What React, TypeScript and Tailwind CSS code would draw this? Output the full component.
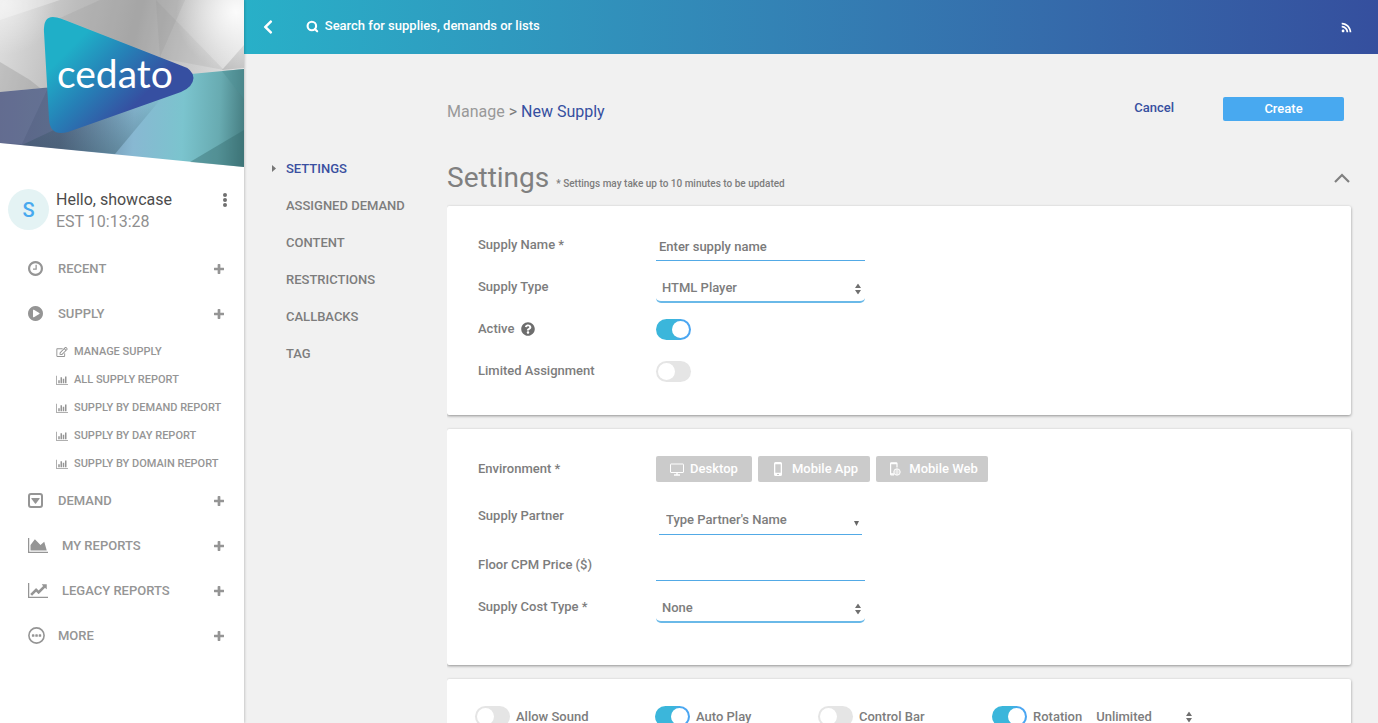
import { useState } from 'react';
import type { ReactNode } from 'react';
import { Search } from 'lucide-react';
import { FaChevronLeft, FaRss, FaQuestionCircle, FaRegEdit } from 'react-icons/fa';

const BarChartIcon = () => (
  <svg viewBox="0 0 2048 1792" className="w-3 shrink-0" fill="currentColor" aria-hidden="true">
    <path d="M640 896v512h-256v-512h256zm384-512v1024h-256v-1024h256zm1024 1152v128h-2048v-1536h128v1408h1920zm-640-896v768h-256v-768h256zm384-384v1152h-256v-1152h256z" />
  </svg>
);

const ClockIcon = () => (
  <svg viewBox="128 128 1536 1536" className="w-[15px]" fill="currentColor" aria-hidden="true">
    <path d="M1024 544v448q0 14-9 23t-23 9h-320q-14 0-23-9t-9-23v-64q0-14 9-23t23-9h224v-352q0-14 9-23t23-9h64q14 0 23 9t9 23zm416 352q0-148-73-273t-198-198-273-73-273 73-198 198-73 273 73 273 198 198 273 73 273-73 198-198 73-273zm224 0q0 209-103 385.5t-279.5 279.5-385.5 103-385.5-103-279.5-279.5-103-385.5 103-385.5 279.5-279.5 385.5-103 385.5 103 279.5 279.5 103 385.5z" />
  </svg>
);

const PlayIcon = () => (
  <svg viewBox="128 128 1536 1536" className="w-[15px]" fill="currentColor" aria-hidden="true">
    <path d="M896 128q209 0 385.5 103t279.5 279.5 103 385.5-103 385.5-279.5 279.5-385.5 103-385.5-103-279.5-279.5-103-385.5 103-385.5 279.5-279.5 385.5-103zm384 823q32-18 32-55t-32-55l-544-320q-31-19-64-1-32 19-32 56v640q0 37 32 56 16 8 32 8 17 0 32-9z" />
  </svg>
);

const CaretSquareIcon = () => (
  <svg viewBox="0 0 15 15" className="w-[15px]" fill="currentColor" aria-hidden="true">
    <rect x="1" y="1" width="13" height="13" rx="2" fill="none" stroke="currentColor" strokeWidth="2" />
    <path d="M3.8 5h7.4q.8 0 .4.8L8 10.4q-.5.6-1 0L3.4 5.8Q3 5 3.8 5z" />
  </svg>
);

const AreaChartIcon = () => (
  <svg viewBox="0 128 2048 1536" className="w-5" fill="currentColor" aria-hidden="true">
    <path d="M2048 1536v128h-2048v-1536h128v1408h1920zM1664 512l256 896h-1664v-576l448-576 576 576z" />
  </svg>
);

const LineChartIcon = () => (
  <svg viewBox="0 128 2048 1536" className="w-5" fill="currentColor" aria-hidden="true">
    <path d="M2048 1536v128h-2048v-1536h128v1408h1920zm-128-1248v435q0 21-19.5 29.5t-35.5-7.5l-121-121-633 633q-10 10-23 10t-23-10l-233-233-416 416-192-192 585-585q10-10 23-10t23 10l233 233 464-464-121-121q-16-16-7.5-35.5t29.5-19.5h435q14 0 23 9t9 23z" />
  </svg>
);

const MoreIcon = () => (
  <svg viewBox="0 0 17 17" className="w-[17px]" fill="currentColor" aria-hidden="true">
    <circle cx="8.5" cy="8.5" r="7.6" fill="none" stroke="currentColor" strokeWidth="1.6" />
    <rect x="3.9" y="7.3" width="2.5" height="2.5" rx=".6" />
    <rect x="7.3" y="7.3" width="2.5" height="2.5" rx=".6" />
    <rect x="10.7" y="7.3" width="2.5" height="2.5" rx=".6" />
  </svg>
);

const PlusIcon = () => (
  <svg viewBox="192 128 1408 1408" className="w-[10px]" fill="currentColor" aria-hidden="true">
    <path d="M1600 736v192q0 40-28 68t-68 28h-416v416q0 40-28 68t-68 28h-192q-40 0-68-28t-28-68v-416h-416q-40 0-68-28t-28-68v-192q0-40 28-68t68-28h416v-416q0-40 28-68t68-28h192q40 0 68 28t28 68v416h416q40 0 68 28t28 68z" />
  </svg>
);

const DesktopIcon = () => (
  <svg viewBox="0 0 14 13" className="h-[13px] w-[14px]" fill="none" stroke="currentColor" aria-hidden="true">
    <rect x=".5" y="1" width="13" height="8.5" rx=".5" />
    <path d="M4 12h6M7 9.5V12" strokeWidth="1.4" />
  </svg>
);

const PhoneIcon = () => (
  <svg viewBox="0 0 8 14" className="h-[14px] w-2" fill="currentColor" aria-hidden="true">
    <path fillRule="evenodd" d="M1.5 0h5Q8 0 8 1.500v11Q8 14 6.500 14h-5Q0 14 0 12.500v-11Q0 0 1.500 0zM1.300 2.300v8.400h5.400V2.300zM3 12v.9h2V12z" />
  </svg>
);

const PhoneWebIcon = () => (
  <svg viewBox="0 0 11 14" className="h-[14px] w-[11px]" fill="none" stroke="currentColor" aria-hidden="true">
    <path d="M4 13H1.500Q.6 13 .6 12V1.500Q.6.8 1.500.8h4.500Q7 .8 7 1.600V5.500" strokeWidth="1.200" />
    <path d="M.6 1.500H7M.6 12H4" strokeWidth="1.500" />
    <circle cx="7" cy="10" r="3.200" />
    <path d="M4 10h6M5 8h4M5 12h4M7 7v6" strokeWidth=".7" />
  </svg>
);

const Logo = () => (
  <svg viewBox="0 0 244 167" className="block w-full" role="img" aria-label="cedato">
    <defs>
      <linearGradient id="mark" x1="60" y1="45" x2="128" y2="112" gradientUnits="userSpaceOnUse">
        <stop offset="0.1" stopColor="#1fafc8" />
        <stop offset="0.55" stopColor="#267fb6" />
        <stop offset="1" stopColor="#364fa1" />
      </linearGradient>
      <linearGradient id="grey" x1="0" y1="0" x2="244" y2="60" gradientUnits="userSpaceOnUse">
        <stop offset="0" stopColor="#e0e0e0" />
        <stop offset="0.3" stopColor="#bdbdbd" />
        <stop offset="0.55" stopColor="#acacac" />
        <stop offset="0.75" stopColor="#c6c6c6" />
        <stop offset="1" stopColor="#e4e4e4" />
      </linearGradient>
      <linearGradient id="band" x1="0" y1="110" x2="244" y2="120" gradientUnits="userSpaceOnUse">
        <stop offset="0" stopColor="#5b6387" />
        <stop offset="0.25" stopColor="#5c6d8c" />
        <stop offset="0.55" stopColor="#88b8d2" />
        <stop offset="0.75" stopColor="#7bc4ce" />
        <stop offset="0.9" stopColor="#68abb1" />
        <stop offset="1" stopColor="#477f83" />
      </linearGradient>
      <radialGradient id="glow">
        <stop offset="0" stopColor="#fff" stopOpacity="0.9" />
        <stop offset="1" stopColor="#fff" stopOpacity="0" />
      </radialGradient>
      <linearGradient id="shade" x1="0" y1="95" x2="0" y2="165" gradientUnits="userSpaceOnUse">
        <stop offset="0" stopColor="#23454f" stopOpacity="0" />
        <stop offset="1" stopColor="#23454f" stopOpacity="0.4" />
      </linearGradient>
    </defs>
    <path d="M0 0h244v70L0 92z" fill="url(#grey)" />
    <path d="M0 62L30 80 45 92 0 92z" fill="#777" opacity=".25" />
    <path d="M100 0h85l-25 57L60 18z" fill="#888" opacity=".18" />
    <path d="M156 0l68 70-64-12z" fill="#888" opacity=".15" />
    <path d="M0 20L60 0H0z" fill="#fff" opacity=".3" />
    <path d="M244 45l-22 25 22-2z" fill="#777" opacity=".3" />
    <circle cx="236" cy="12" r="60" fill="url(#glow)" />
    <circle cx="5" cy="5" r="50" fill="url(#glow)" opacity=".5" />
    <path d="M0 92L244 69v98L0 143z" fill="url(#band)" />
    <path d="M0 92L48 88 22 144 0 143z" fill="#7c86ac" opacity=".25" />
    <path d="M22 145L75 120 160 100 115 154z" fill="url(#shade)" />
    <path d="M222 71l22-2v30z" fill="#4d8f94" opacity=".4" />
    <path d="M190 162L244 130v37z" fill="#33666a" opacity=".4" />
    <path d="M44 32Q43 14 57 17.500Q60 18 66 20.500L181 65.500Q193 69 193.500 78Q193 87 181 92L68 132Q50 137 49 119z" fill="url(#mark)" />
    <text x="57" y="88" fill="#fff" fontFamily="Lato, sans-serif" fontSize="39" fontWeight="400">cedato</text>
  </svg>
);

type MenuRowProps = { icon: ReactNode; label: string; wide?: boolean };

const MenuRow = ({ icon, label, wide }: MenuRowProps) => (
  <button type="button" className="flex h-[45px] w-full items-center pr-5 pl-7 text-[13px] text-[#959595]">
    <span className={wide ? 'w-[34px]' : 'w-[30px]'}>{icon}</span>
    <span className="flex-1 text-left">{label}</span>
    <PlusIcon />
  </button>
);

const supplyLinks = [
  'ALL SUPPLY REPORT',
  'SUPPLY BY DEMAND REPORT',
  'SUPPLY BY DAY REPORT',
  'SUPPLY BY DOMAIN REPORT',
];

const Sidebar = () => (
  <aside className="z-10 w-[244px] shrink-0 bg-white shadow-[0_0_3px_rgba(0,0,0,0.3)]">
    <Logo />
    <div className="flex items-start pt-[22px] pr-[13px] pl-2">
      <div className="flex size-[41px] items-center justify-center rounded-full bg-[#e4f3f4] text-xl text-[#47a9ef]">
        S
      </div>
      <div className="ml-[7px] flex-1 text-base leading-[22px] font-normal">
        <p className="text-[#4c4c4c]">Hello, showcase</p>
        <p className="text-[#8f8f8f]">EST 10:13:28</p>
      </div>
      <button type="button" aria-label="Account menu" className="flex flex-col gap-[1px] p-1">
        <span className="size-1 rounded-sm bg-[#707070]" />
        <span className="size-1 rounded-sm bg-[#707070]" />
        <span className="size-1 rounded-sm bg-[#707070]" />
      </button>
    </div>
    <nav className="pt-[13px]">
      <MenuRow icon={<ClockIcon />} label="RECENT" />
      <MenuRow icon={<PlayIcon />} label="SUPPLY" />
      <ul className="pt-[2px] pl-14 text-[11px] text-[#959595]">
        <li>
          <a href="#manage" className="flex h-7 items-center gap-[6px]">
            <FaRegEdit className="w-3 text-[10px]" />
            MANAGE SUPPLY
          </a>
        </li>
        {supplyLinks.map((label) => (
          <li key={label}>
            <a href="#report" className="flex h-7 items-center gap-[6px]">
              <BarChartIcon />
              {label}
            </a>
          </li>
        ))}
      </ul>
      <MenuRow icon={<CaretSquareIcon />} label="DEMAND" />
      <MenuRow icon={<AreaChartIcon />} label="MY REPORTS" wide />
      <MenuRow icon={<LineChartIcon />} label="LEGACY REPORTS" wide />
      <MenuRow icon={<MoreIcon />} label="MORE" />
    </nav>
  </aside>
);

const Toggle = ({ id, on = false }: { id: string; on?: boolean }) => {
  const [checked, setChecked] = useState(on);
  return (
    <input
      id={id}
      type="checkbox"
      checked={checked}
      onChange={() => setChecked(!checked)}
      className="flex h-[21px] w-[35px] shrink-0 cursor-pointer appearance-none items-center rounded-full bg-[#e5e5e5] px-[2px] before:size-[17px] before:rounded-full before:bg-white checked:justify-end checked:bg-linear-to-r checked:from-[#3bb6db] checked:from-50% checked:to-[#4ba6f2] checked:to-80%"
    />
  );
};

const SortArrows = () => (
  <svg viewBox="0 0 6 11" className="pointer-events-none absolute top-1/2 right-1 h-[11px] w-[6px] -translate-y-1/2" fill="#707070" aria-hidden="true">
    <path d="M0 4.500L3 0l3 4.500zM0 6.500h6L3 11z" />
  </svg>
);

const SelectBox = ({ id, value }: { id: string; value: string }) => (
  <div className="relative w-[209px]">
    <select id={id} className="block h-7 w-full appearance-none rounded-[5px] border-b-2 border-[#6ab9e8] bg-white px-[6px]">
      <option>{value}</option>
    </select>
    <SortArrows />
  </div>
);

const inputClass =
  'block h-7 w-[209px] border-b border-[#52aae6] bg-transparent px-[3px] outline-none placeholder:text-[#7a7a7a] placeholder:opacity-100';

const Label = ({ id, children }: { id?: string; children: ReactNode }) => (
  <label htmlFor={id} className="w-[178px] shrink-0">
    {children}
  </label>
);

const envButton = 'flex h-[26px] items-center justify-center rounded-xs bg-[#cbcbcb] text-white';
const card = 'rounded-xs bg-white shadow-[0_1px_3px_rgba(0,0,0,0.4)]';

const sections = ['ASSIGNED DEMAND', 'CONTENT', 'RESTRICTIONS', 'CALLBACKS', 'TAG'];

export default function App() {
  return (
    <div className="flex h-screen overflow-hidden bg-[#f1f1f1] font-[Roboto,sans-serif] text-[13px] font-medium text-[#7d7d7d]">
      <Sidebar />
      <div className="flex min-w-0 flex-1 flex-col">
        <header className="flex h-[54px] shrink-0 items-center bg-linear-to-r from-[#28b0c8] to-[#354f9e] pr-[26px] pl-4 text-white">
          <button type="button" aria-label="Back">
            <FaChevronLeft className="text-base" />
          </button>
          <label className="ml-[30px] flex flex-1 items-center gap-[6px] pb-[2px]">
            <Search size={13} strokeWidth={4} />
            <input
              type="text"
              aria-label="Search"
              placeholder="Search for supplies, demands or lists"
              className="w-full bg-transparent outline-none placeholder:text-white placeholder:opacity-100"
            />
          </label>
          <button type="button" aria-label="Feed">
            <FaRss className="text-[11px]" />
          </button>
        </header>

        <div className="flex min-h-0 flex-1">
          <nav className="w-[203px] shrink-0 pt-24 pl-7">
            <a href="#settings" className="flex h-[37px] items-center text-[#3a4fa0]">
              <svg viewBox="0 0 4 7" className="mr-[10px] h-[7px] w-1" fill="#777" aria-hidden="true">
                <path d="M0 0l4 3.500L0 7z" />
              </svg>
              SETTINGS
            </a>
            {sections.map((name) => (
              <a key={name} href="#section" className="flex h-[37px] items-center pl-[14px]">
                {name}
              </a>
            ))}
          </nav>

          <main className="min-w-0 flex-1 overflow-y-auto pr-[27px] [scrollbar-width:none]">
            <div className="flex items-start pt-[43px] pr-[7px]">
              <h1 className="flex-1 pt-[3px] text-base leading-6 font-normal">
                <a href="#manage" className="text-[#999]">Manage</a>
                <span> &gt; </span>
                <span className="text-[#364fa0]">New Supply</span>
              </h1>
              <button type="button" className="mr-[49px] leading-[22px] text-[#364fa0]">Cancel</button>
              <button type="button" className="h-6 w-[121px] rounded-xs bg-[#48a9f0] text-white">Create</button>
            </div>

            <div className="flex items-center pt-[37px] pb-[11px]">
              <div className="flex flex-1 items-baseline gap-[7px]">
                <h2 className="text-[28px] leading-[34px] font-normal text-[#808080]">Settings</h2>
                <p className="text-[10px]">* Settings may take up to 10 minutes to be updated</p>
              </div>
              <button type="button" aria-label="Collapse section">
                <svg viewBox="0 0 16 10" className="mr-[1px] w-4" fill="none" stroke="#808080" strokeWidth="2.2" aria-hidden="true">
                  <path d="M1 9l7-7 7 7" />
                </svg>
              </button>
            </div>

            <section className={`${card} pt-[18px] pb-[23px] pl-[31px]`}>
              <div className="flex h-[42px] items-center">
                <Label id="name">Supply Name *</Label>
                <div className="pt-1">
                  <input id="name" type="text" placeholder="Enter supply name" className={inputClass} />
                </div>
              </div>
              <div className="flex h-[42px] items-center">
                <Label id="type">Supply Type</Label>
                <div className="pt-1">
                  <SelectBox id="type" value="HTML Player" />
                </div>
              </div>
              <div className="flex h-[42px] items-center">
                <Label id="active">
                  <span className="flex items-center gap-[7px]">
                    Active
                    <FaQuestionCircle className="text-sm text-[#6d6d6d]" />
                  </span>
                </Label>
                <Toggle id="active" on />
              </div>
              <div className="flex h-[42px] items-center">
                <Label id="limited">Limited Assignment</Label>
                <Toggle id="limited" />
              </div>
            </section>

            <section className={`${card} mt-[14px] pt-[21px] pb-[37px] pl-[31px]`}>
              <div className="flex h-[38px] items-center">
                <span className="w-[178px] shrink-0">Environment *</span>
                <div className="flex gap-[6px]">
                  <button type="button" className={`${envButton} w-24 gap-[6px]`}>
                    <DesktopIcon />
                    Desktop
                  </button>
                  <button type="button" className={`${envButton} w-28 gap-[10px] pl-1`}>
                    <PhoneIcon />
                    Mobile App
                  </button>
                  <button type="button" className={`${envButton} w-28 gap-2 pl-1`}>
                    <PhoneWebIcon />
                    Mobile Web
                  </button>
                </div>
              </div>
              <div className="flex h-14 items-center">
                <Label id="partner">Supply Partner</Label>
                <div className="px-[3px] pt-2">
                  <div className="relative w-[203px]">
                    <select id="partner" className="block h-[30px] w-full appearance-none border-b border-[#52aae6] bg-white px-[7px]">
                      <option>Type Partner&apos;s Name</option>
                    </select>
                    <svg viewBox="0 0 5 5" className="pointer-events-none absolute right-[3px] bottom-[9px] w-[5px]" fill="#666" aria-hidden="true">
                      <path d="M0 0h5L2.500 5z" />
                    </svg>
                  </div>
                </div>
              </div>
              <div className="flex h-[42px] items-center">
                <Label id="floor">Floor CPM Price ($)</Label>
                <div className="pt-1">
                  <input id="floor" type="text" className={inputClass} />
                </div>
              </div>
              <div className="flex h-[42px] items-center">
                <Label id="cost">Supply Cost Type *</Label>
                <div className="pt-1">
                  <SelectBox id="cost" value="None" />
                </div>
              </div>
            </section>

            <section className={`${card} mt-[14px] grid grid-cols-[180px_163px_174px_1fr] items-center pt-[27px] pb-8 pl-7`}>
              <div className="flex items-center gap-[6px]">
                <Toggle id="sound" />
                <label htmlFor="sound">Allow Sound</label>
              </div>
              <div className="flex items-center gap-[6px]">
                <Toggle id="autoplay" on />
                <label htmlFor="autoplay">Auto Play</label>
              </div>
              <div className="flex items-center gap-[6px]">
                <Toggle id="controls" />
                <label htmlFor="controls">Control Bar</label>
              </div>
              <div className="flex items-center gap-[6px]">
                <Toggle id="rotation" on />
                <label htmlFor="rotation">Rotation</label>
                <div className="relative ml-2 w-[100px]">
                  <select aria-label="Rotation limit" className="block h-[21px] w-full appearance-none bg-white">
                    <option>Unlimited</option>
                  </select>
                  <SortArrows />
                </div>
              </div>
            </section>
          </main>
        </div>
      </div>
    </div>
  );
}
